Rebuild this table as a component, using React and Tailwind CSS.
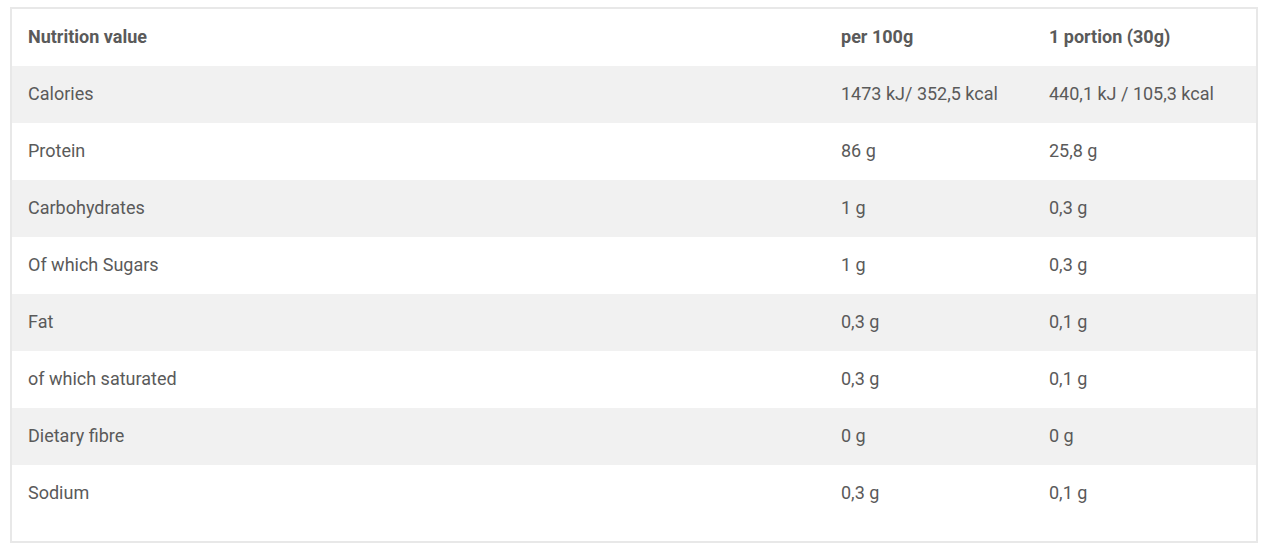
import React from "react";

const rows = [
  ["Calories", "1473 kJ/ 352,5 kcal", "440,1 kJ / 105,3 kcal"],
  ["Protein", "86 g", "25,8 g"],
  ["Carbohydrates", "1 g", "0,3 g"],
  ["Of which Sugars", "1 g", "0,3 g"],
  ["Fat", "0,3 g", "0,1 g"],
  ["of which saturated", "0,3 g", "0,1 g"],
  ["Dietary fibre", "0 g", "0 g"],
  ["Sodium", "0,3 g", "0,1 g"],
];

const App = () => {
  return (
    <div className="w-[1267px] h-[550px] bg-white pt-[7px] pl-[10px] font-['Roboto',sans-serif] text-[#5a5a5a]">
      {/* table box */}
      <div className="w-[1248px] border-2 border-[#e8e8e8] pb-[19px]">
        <table className="w-full border-collapse text-[18px]">
          <thead>
            <tr className="h-[57px]">
              <th className="w-[813px] pl-4 pb-[2px] text-left font-bold">Nutrition value</th>
              <th className="w-[208px] pl-4 pb-[2px] text-left font-bold">per 100g</th>
              <th className="pl-4 pb-[2px] text-left font-bold">1 portion (30g)</th>
            </tr>
          </thead>
          <tbody>
            {rows.map((r, i) => (
              <tr key={r[0]} className={i % 2 === 0 ? "h-[57px] bg-[#f1f1f1]" : "h-[57px]"}>
                <td className="pl-4 pb-[2px]">{r[0]}</td>
                <td className="pl-4 pb-[2px]">{r[1]}</td>
                <td className="pl-4 pb-[2px]">{r[2]}</td>
              </tr>
            ))}
          </tbody>
        </table>
      </div>
    </div>
  );
};

export default App;
